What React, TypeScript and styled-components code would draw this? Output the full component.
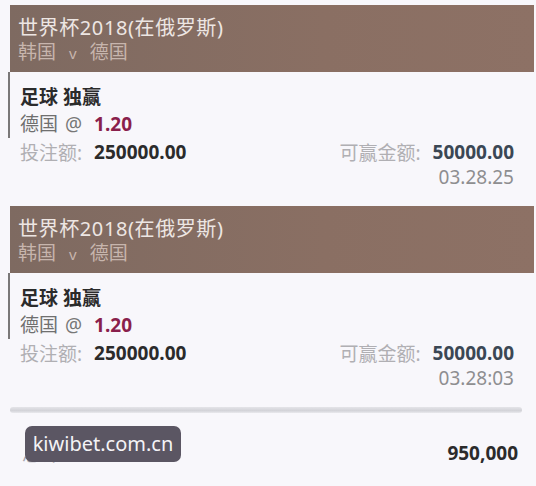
import React from 'react';
import styled, { createGlobalStyle } from 'styled-components';

const GlobalStyle = createGlobalStyle`
    html, body {
        margin: 0;
        padding: 0;
        background: #f8f7fb;
    }
    body {
        font-family: "Noto Sans", "Noto Sans CJK SC", sans-serif;
        -webkit-font-smoothing: antialiased;
    }
`;

const Page = styled.div`
    width: 536px;
    height: 486px;
    box-sizing: border-box;
    padding: 5px 2px 0 8px;
    background: #f8f7fb;
    overflow: hidden;
`;

const Ticket = styled.div`
    margin-bottom: 16px;
`;

const MatchHeader = styled.div`
    margin-left: 2px;
    height: 67px;
    box-sizing: border-box;
    padding: 11px 8px 0;
    background: linear-gradient(90deg, #7e6a61 0%, #8a6f63 60%, #8d7165 100%);
`;

const League = styled.div`
    font-size: 20px;
    line-height: 24px;
    letter-spacing: 0.6px;
    color: #ede6e3;
    white-space: nowrap;
`;

const Teams = styled.div`
    font-size: 19px;
    line-height: 24px;
    color: #c7b5ad;
    white-space: nowrap;

    span {
        margin: 0 13px;
        font-size: 15px;
    }
`;

const Body = styled.div`
    padding-right: 20px;
`;

// dark rule on the left runs from the header down past the pick line
const Selection = styled.div`
    border-left: 2px solid #7a7878;
    padding: 12px 0 0 10px;
`;

const Line = styled.div<{ $bold?: boolean }>`
    font-size: 19px;
    line-height: 27px;
    color: ${p => (p.$bold ? '#2b2b2b' : '#6f6f6f')};
    font-weight: ${p => (p.$bold ? 700 : 400)};
    white-space: nowrap;
`;

const At = styled.span`
    margin: 0 12px 0 7px;
    color: #777;
`;

const Odds = styled.span`
    font-weight: 700;
    color: #8a1f4c;
`;

const AmountRow = styled.div`
    display: flex;
    justify-content: space-between;
    align-items: center;
    height: 27px;
    padding-left: 12px;
`;

const Field = styled.div`
    display: flex;
    align-items: center;
    gap: 12px;
    white-space: nowrap;
`;

const Label = styled.span`
    font-size: 19px;
    color: #b0afb3;
`;

const Value = styled.span<{ $tone?: string }>`
    font-size: 19px;
    font-weight: 700;
    color: ${p => p.$tone || '#2b2b2b'};
`;

const Time = styled.div`
    text-align: right;
    font-size: 19px;
    line-height: 25px;
    color: #8e8e90;
`;

const Divider = styled.div`
    margin: 0 12px 0 2px;
    height: 6px;
    border-radius: 3px;
    background: linear-gradient(180deg, #e4e4e8 0%, #d3d3d8 60%, #e9e9ed 100%);
`;

const TotalRow = styled.div`
    position: relative;
    display: flex;
    justify-content: space-between;
    align-items: center;
    height: 28px;
    margin-top: 26px;
    padding: 0 16px 0 14px;
`;

const TotalLabel = styled.span`
    font-size: 19px;
    color: #a9a8ad;
`;

const TotalValue = styled.span`
    font-size: 19px;
    font-weight: 700;
    color: #2b2b2b;
`;

// site badge laid over the total row
const Watermark = styled.div`
    position: absolute;
    left: 17px;
    top: -13px;
    width: 156px;
    height: 36px;
    border-radius: 7px;
    background: #5b5663;
    color: #f4f3f6;
    font-size: 20px;
    line-height: 36px;
    text-align: center;
`;

type Bet = {
    league: string;
    home: string;
    away: string;
    market: string;
    pick: string;
    odds: string;
    stake: string;
    payout: string;
    time: string;
};

const bets: Bet[] = [
    {
        league: '世界杯2018(在俄罗斯)',
        home: '韩国',
        away: '德国',
        market: '足球 独赢',
        pick: '德国',
        odds: '1.20',
        stake: '250000.00',
        payout: '50000.00',
        time: '03.28.25',
    },
    {
        league: '世界杯2018(在俄罗斯)',
        home: '韩国',
        away: '德国',
        market: '足球 独赢',
        pick: '德国',
        odds: '1.20',
        stake: '250000.00',
        payout: '50000.00',
        time: '03.28:03',
    },
];

const App = () => (
    <>
        <GlobalStyle />
        <Page>
            {bets.map((bet, i) => (
                <Ticket key={i}>
                    <MatchHeader>
                        <League>{bet.league}</League>
                        <Teams>
                            {bet.home}
                            <span>v</span>
                            {bet.away}
                        </Teams>
                    </MatchHeader>
                    <Body>
                        <Selection>
                            <Line $bold>{bet.market}</Line>
                            <Line>
                                {bet.pick}
                                <At>@</At>
                                <Odds>{bet.odds}</Odds>
                            </Line>
                        </Selection>
                        <AmountRow>
                            <Field>
                                <Label>投注额:</Label>
                                <Value>{bet.stake}</Value>
                            </Field>
                            <Field>
                                <Label>可赢金额:</Label>
                                <Value $tone="#3b4754">{bet.payout}</Value>
                            </Field>
                        </AmountRow>
                        <Time>{bet.time}</Time>
                    </Body>
                </Ticket>
            ))}
            <Divider />
            <TotalRow>
                <TotalLabel>总计</TotalLabel>
                <TotalValue>950,000</TotalValue>
                <Watermark>kiwibet.com.cn</Watermark>
            </TotalRow>
        </Page>
    </>
);

export default App;
